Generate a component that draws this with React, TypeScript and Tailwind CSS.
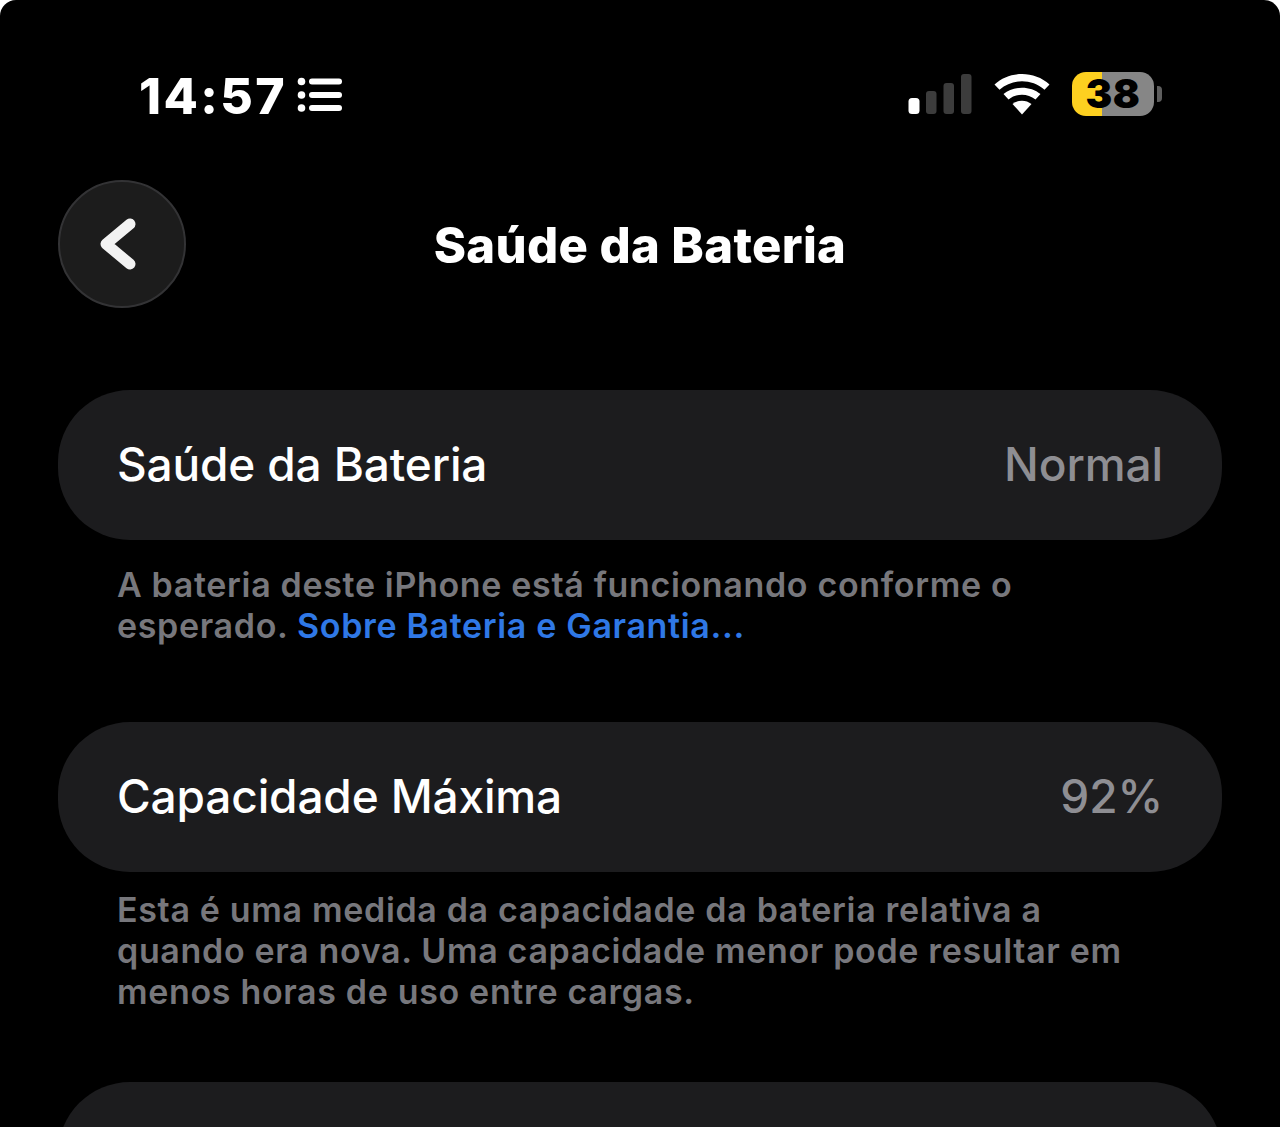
import React from "react";

const font = { fontFamily: '"Inter", "Liberation Sans", sans-serif' };

function ListIcon() {
  return (
    <svg width="46" height="36" viewBox="0 0 46 36" className="block">
      <circle cx="4.5" cy="4.5" r="3.8" fill="#fff" />
      <circle cx="4.5" cy="18" r="3.8" fill="#fff" />
      <circle cx="4.5" cy="31" r="3.8" fill="#fff" />
      <rect x="12" y="1.5" width="33" height="6" rx="3" fill="#fff" />
      <rect x="12" y="15" width="33" height="6" rx="3" fill="#fff" />
      <rect x="12" y="28" width="33" height="6" rx="3" fill="#fff" />
    </svg>
  );
}

function Signal() {
  return (
    <svg width="64" height="42" viewBox="0 0 64 42" className="block">
      <rect x="0.5" y="25" width="11" height="16" rx="3.5" fill="#fff" />
      <rect x="18" y="18" width="10.5" height="23" rx="3" fill="#3c3c3c" />
      <rect x="35.5" y="10" width="10.5" height="31" rx="3" fill="#3c3c3c" />
      <rect x="53" y="1" width="10.5" height="40" rx="3" fill="#3c3c3c" />
    </svg>
  );
}

function Wifi() {
  return (
    <svg width="56" height="42" viewBox="0 0 56 42" className="block">
      <path d="M28 41.5 L18.5 31 C24 26.5 32 26.5 37.5 31 Z" fill="#fff" />
      <path d="M14.5 26.5 L9.5 21 C19.5 12.5 36.5 12.5 46.5 21 L41.5 26.5 C33.5 20 22.5 20 14.5 26.5 Z" fill="#fff" />
      <path d="M5.5 16.8 L0.5 11.5 C15.5 -2.5 40.5 -2.5 55.5 11.5 L50.5 16.8 C37.5 5.5 18.5 5.5 5.5 16.8 Z" fill="#fff" />
    </svg>
  );
}

function Battery() {
  return (
    <div className="flex items-center gap-[3px]">
      <div className="relative w-[82px] h-[44px] flex items-center justify-center">
        <div className="absolute inset-0 rounded-[14px] overflow-hidden flex">
          <div className="w-[30px] bg-[#fdd020]" />
          <div className="flex-1 bg-[#868686]" />
        </div>
        <span className="relative text-black text-[40px] font-black leading-[44px] tracking-[0.5px]">38</span>
      </div>
      <div className="w-[5px] h-[16px] rounded-r-[4px] bg-[#5e5e5e]" />
    </div>
  );
}

function Chevron() {
  return (
    <svg width="38" height="54" viewBox="0 0 38 54" className="block">
      <path d="M31 7 L7 27 L31 47" fill="none" stroke="#f2f2f2" strokeWidth="11" strokeLinecap="round" strokeLinejoin="round" />
    </svg>
  );
}

function Row({ label, value }: { label: string; value: string }) {
  return (
    <div className="h-[150px] rounded-[72px] bg-[#1c1c1e] flex items-center justify-between pl-[59px] pr-[59px] pb-[2px]">
      <span className="text-white text-[46px] font-medium leading-none tracking-[-0.15px]">{label}</span>
      <span className="text-[#8e8e93] text-[46px] font-medium leading-none tracking-[-0.1px]">{value}</span>
    </div>
  );
}

function Note({ children, className }: { children: React.ReactNode; className: string }) {
  return (
    <p className={`pl-[117px] pr-[130px] text-[#77777c] text-[34px] font-semibold leading-[41px] tracking-[0.66px] ${className}`}>
      {children}
    </p>
  );
}

export default function App() {
  return (
    <div className="w-[1280px] h-[1127px] bg-white overflow-hidden" style={font}>
      <div className="h-full bg-black rounded-t-[16px] overflow-hidden">
        <div className="h-[72px]" />
        <div className="h-[48px] flex items-center justify-between pl-[139px] pr-[118px]">
          <div className="flex items-center gap-[10px]">
            <span className="text-white text-[50px] font-extrabold leading-none tracking-[2.4px]">14:57</span>
            <div className="pb-[2px]">
              <ListIcon />
            </div>
          </div>
          <div className="flex items-center gap-[22px] pb-[4px]">
            <Signal />
            <Wifi />
            <Battery />
          </div>
        </div>
        <div className="h-[60px]" />
        <div className="relative h-[128px] px-[58px] flex items-center justify-center pt-[2px]">
          <div className="absolute left-[58px] top-0 w-[128px] h-[128px] rounded-full bg-[#1c1c1c] border-2 border-[#333335] flex items-center justify-center pr-[8px]">
            <Chevron />
          </div>
          <h1 className="text-white text-[49px] font-extrabold leading-none tracking-[0.35px]">Saúde da Bateria</h1>
        </div>
        <div className="h-[82px]" />
        <div className="px-[58px]">
          <Row label="Saúde da Bateria" value="Normal" />
        </div>
        <Note className="mt-[24px]">
          A bateria deste iPhone está funcionando conforme o esperado.{" "}
          <span className="text-[#2f78e6]">Sobre Bateria e Garantia...</span>
        </Note>
        <div className="px-[58px] mt-[76px]">
          <Row label="Capacidade Máxima" value="92%" />
        </div>
        <Note className="mt-[17px]">
          Esta é uma medida da capacidade da bateria relativa a quando era nova. Uma capacidade menor pode resultar em menos horas de uso entre cargas.
        </Note>
        <div className="px-[58px] mt-[70px]">
          <div className="h-[150px] rounded-[72px] bg-[#1c1c1e]" />
        </div>
      </div>
    </div>
  );
}
